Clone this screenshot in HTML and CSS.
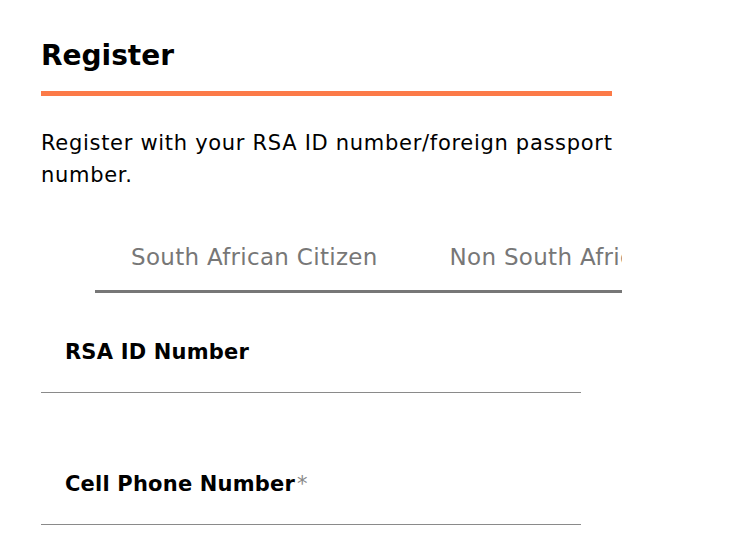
FILE: index.html
```html
<!DOCTYPE html>
<html lang="en">
<head>
    <meta charset="UTF-8">
    <meta name="viewport" content="width=device-width, initial-scale=1.0">
    <title>Register</title>
    <link rel="stylesheet" href="styles.css">
</head>
<body>

<div class="register">
    <h1>Register</h1>
    <p class="intro">Register with your RSA ID number/foreign passport number.</p>

    <div class="tabs">
        <div class="tab">South African Citizen</div>
        <div class="tab">Non South African Citizen</div>
    </div>

    <div class="field">
        <label for="idNumber">RSA ID Number</label>
        <input type="text" id="idNumber">
    </div>

    <div class="field">
        <label for="cellNumber">Cell Phone Number<span class="required">*</span></label>
        <input type="text" id="cellNumber">
    </div>
</div>

</body>
</html>
```

FILE: styles.css
```css
body {
    font-family: "DejaVu Sans", "Open Sans", sans-serif;
    margin: 0;
    padding: 0;
    background-color: #fff;
    color: #000;
}
.register {
    width: 585px;
    padding: 34px 0 0 41px;
}
h1 {
    font-size: 28px;
    font-weight: 700;
    line-height: 44px;
    margin: 0;
    padding-bottom: 13px;
    width: 571px;
    border-bottom: 5px solid #fc7a48;
}
.intro {
    font-size: 21px;
    letter-spacing: 0.7px;
    line-height: 32px;
    margin: 31px 0 0 0;
}
.tabs {
    display: flex;
    margin: 47px 0 0 54px;
    width: 527px;
    overflow: hidden;
    white-space: nowrap;
    border-bottom: 3px solid #777;
}
.tab {
    flex: none;
    padding: 4px 36px 18px 36px;
    font-size: 23px;
    letter-spacing: 0.3px;
    line-height: 30px;
    color: #777;
}
.field {
    width: 540px;
    margin-top: 45px;
    border-bottom: 1px solid #8a8a8a;
}
.field + .field {
    margin-top: 77px;
}
.field label {
    display: block;
    padding-left: 24px;
    font-size: 21px;
    font-weight: 700;
    letter-spacing: 0.2px;
    line-height: 28px;
}
.required {
    color: #888;
    font-weight: 400;
    margin-left: 2px;
}
.field input {
    display: block;
    width: 100%;
    height: 24px;
    border: none;
    outline: none;
    padding: 0;
    margin-top: 2px;
    background: transparent;
}
```
